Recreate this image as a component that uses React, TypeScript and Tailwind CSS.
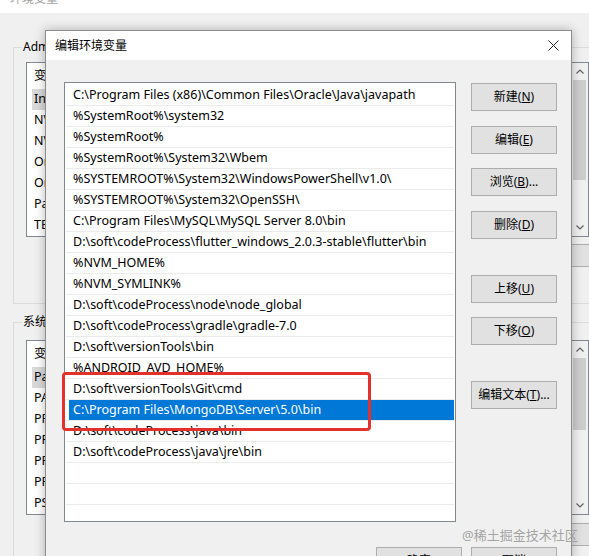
const FONT = '"Noto Sans", "Noto Sans CJK SC", sans-serif'

const PATHS = [
    "C:\\Program Files (x86)\\Common Files\\Oracle\\Java\\javapath",
    "%SystemRoot%\\system32",
    "%SystemRoot%",
    "%SystemRoot%\\System32\\Wbem",
    "%SYSTEMROOT%\\System32\\WindowsPowerShell\\v1.0\\",
    "%SYSTEMROOT%\\System32\\OpenSSH\\",
    "C:\\Program Files\\MySQL\\MySQL Server 8.0\\bin",
    "D:\\soft\\codeProcess\\flutter_windows_2.0.3-stable\\flutter\\bin",
    "%NVM_HOME%",
    "%NVM_SYMLINK%",
    "D:\\soft\\codeProcess\\node\\node_global",
    "D:\\soft\\codeProcess\\gradle\\gradle-7.0",
    "D:\\soft\\versionTools\\bin",
    "%ANDROID_AVD_HOME%",
    "D:\\soft\\versionTools\\Git\\cmd",
    "C:\\Program Files\\MongoDB\\Server\\5.0\\bin",
    "D:\\soft\\codeProcess\\java\\bin",
    "D:\\soft\\codeProcess\\java\\jre\\bin",
    "",
    "",
    "",
]

const USER_VARS = ["IntelliJ IDEA", "NVM_HOME", "NVM_SYMLINK", "OneDrive", "OneDriveConsumer", "Path", "TEMP"]
const SYS_VARS = [
    "Path",
    "PATHEXT",
    "PROCESSOR_ARCHITECTURE",
    "PROCESSOR_IDENTIFIER",
    "PROCESSOR_LEVEL",
    "PROCESSOR_REVISION",
    "PSModulePath",
]

function Chevron({ up }: { up?: boolean }) {
    return (
        <svg width="8" height="5" viewBox="0 0 8 5" className="block">
            <path
                d={up ? "M0.5 4.5 L4 1 L7.5 4.5" : "M0.5 0.5 L4 4 L7.5 0.5"}
                fill="none"
                stroke="#606060"
                strokeWidth="1.2"
            />
        </svg>
    )
}

function ScrollBar({ thumb }: { thumb: string }) {
    return (
        <div className="w-[17px] flex flex-col bg-[#f0f0f0]">
            <div className="h-[17px] flex items-center justify-center">
                <Chevron up />
            </div>
            <div className={`${thumb} mx-[2px] bg-[#cdcdcd]`} />
            <div className="flex-1" />
            <div className="h-[17px] flex items-center justify-center">
                <Chevron />
            </div>
        </div>
    )
}

function BgList({ items, header, scroll }: { items: string[]; header: string; scroll: React.ReactNode }) {
    return (
        <div className="flex w-[563px] border border-[#828790] bg-white">
            <div className="flex-1 text-[12.5px]">
                <div className="h-[26px] flex items-center pl-[7px]">{header}</div>
                {items.map((v, i) => (
                    <div key={v} className="h-[21px] flex items-center pl-[5px]">
                        <div className={`h-full flex items-center pl-[2px] pr-[8px] ${i === 0 ? "bg-[#d9d9d9]" : ""}`}>
                            {v}
                        </div>
                    </div>
                ))}
            </div>
            {scroll}
        </div>
    )
}

function Button({ label, hot, tail, className = "" }: { label: string; hot: string; tail?: string; className?: string }) {
    return (
        <div
            className={`w-[86px] h-[28px] flex items-center justify-center bg-[#e1e1e1] border border-[#adadad] text-[12px] text-black ${className}`}
        >
            {label}(<span className="underline">{hot}</span>){tail}
        </div>
    )
}

export default function App() {
    return (
        <div className="relative w-[589px] h-[556px] overflow-hidden bg-[#f0f0f0] text-black" style={{ fontFamily: FONT }}>
            {/* background window: 环境变量 */}
            <div className="h-[13px] overflow-hidden bg-white pl-[10px]">
                <div className="-mt-[9px] text-[12px] leading-[16px] text-[#a0a0a0]">环境变量</div>
            </div>

            <div className="ml-[13px] mt-[34px] w-[600px] h-[257px] border-t border-l border-b border-[#dcdcdc]">
                <div className="-mt-[9px] ml-[8px] w-fit bg-[#f0f0f0] px-[1px] text-[12px] leading-[16px]">
                    Administrator 的用户变量(U)
                </div>
                <div className="ml-[12px] mt-[7px]">
                    <BgList header="变量" items={USER_VARS} scroll={<ScrollBar thumb="h-[100px]" />} />
                    <div className="mt-[7px] ml-[480px] w-[90px] h-[23px] bg-[#e1e1e1] border border-[#adadad]" />
                </div>
            </div>

            <div className="ml-[13px] mt-[18px] w-[600px] h-[260px] border-t border-l border-[#dcdcdc]">
                <div className="-mt-[9px] ml-[8px] w-fit bg-[#f0f0f0] px-[1px] text-[12px] leading-[16px]">系统变量(S)</div>
                <div className="ml-[12px] mt-[10px]">
                    <BgList header="变量" items={SYS_VARS} scroll={<ScrollBar thumb="h-[72px]" />} />
                    <div className="mt-[8px] ml-[480px] w-[90px] h-[23px] bg-[#e1e1e1] border border-[#adadad]" />
                </div>
            </div>

            {/* dialog: 编辑环境变量 */}
            <div className="absolute left-[45px] top-[30px] w-[527px] h-[545px] border border-[#8c8c8c] bg-[#f0f0f0] shadow-[0_0_10px_rgba(0,0,0,0.28)]">
                <div className="h-[29px] bg-white flex items-center justify-between pl-[9px] pr-[12px]">
                    <span className="text-[12px]">编辑环境变量</span>
                    <svg width="11" height="11" viewBox="0 0 11 11">
                        <path d="M0.5 0.5 L10.5 10.5 M10.5 0.5 L0.5 10.5" stroke="#222" strokeWidth="1" />
                    </svg>
                </div>

                <div className="pt-[22px] pl-[18px] pr-[14px]">
                    <div className="flex">
                        <div className="w-[392px] h-[440px] overflow-hidden border border-[#828790] bg-white pt-[2px] px-[1px]">
                            {PATHS.map((p, i) => (
                                <div key={i} className="h-[21px] border-b border-[#ebebeb] text-[12.5px]">
                                    {i === 15 ? (
                                        <div className="ml-[3px] h-full flex items-center pl-[4px] bg-[#0078d7] text-white">
                                            {p}
                                        </div>
                                    ) : (
                                        <div className="h-full flex items-center pl-[7px]">{p}</div>
                                    )}
                                </div>
                            ))}
                        </div>

                        <div className="ml-[15px] pt-[1px] flex flex-col">
                            <Button label="新建" hot="N" />
                            <Button label="编辑" hot="E" className="mt-[15px]" />
                            <Button label="浏览" hot="B" tail="..." className="mt-[14px]" />
                            <Button label="删除" hot="D" className="mt-[15px]" />
                            <Button label="上移" hot="U" className="mt-[36px]" />
                            <Button label="下移" hot="O" className="mt-[14px]" />
                            <Button label="编辑文本" hot="T" tail="..." className="mt-[36px]" />
                        </div>
                    </div>

                    <div className="mt-[25px] flex justify-end gap-[9px]">
                        <div className="w-[86px] h-[28px] flex items-center justify-center bg-[#e1e1e1] border border-[#adadad] text-[12px]">
                            确定
                        </div>
                        <div className="w-[86px] h-[28px] flex items-center justify-center bg-[#e1e1e1] border border-[#adadad] text-[12px]">
                            取消
                        </div>
                    </div>
                </div>
            </div>

            {/* red annotation */}
            <div className="absolute left-[62px] top-[372px] w-[309px] h-[59px] border-[3px] border-[#e3322b] rounded-[4px]" />

            {/* watermark */}
            <div className="absolute left-[462px] top-[526px] text-[13px] leading-[18px] text-[#9a9a9a]/90">
                @稀土掘金技术社区
            </div>
        </div>
    )
}
